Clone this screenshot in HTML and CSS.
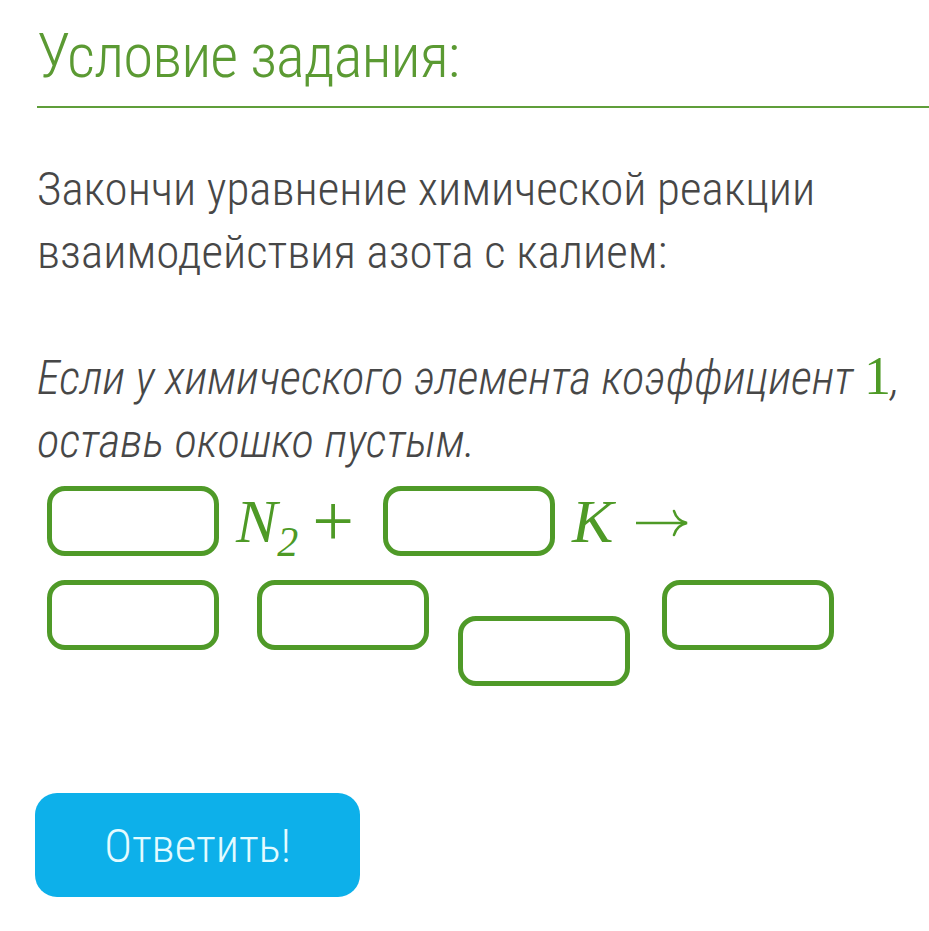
FILE: index.html
```html
<!DOCTYPE html>
<html lang="ru">
<head>
<meta charset="utf-8">
<title>Условие задания</title>
<link rel="stylesheet" href="styles.css">
</head>
<body>
<main class="task">
  <h1 class="task-title">Условие задания:</h1>
  <p class="task-text">Закончи уравнение химической реакции взаимодействия азота с калием:</p>
  <p class="task-hint">Если у химического элемента коэффициент <span class="num">1</span>, оставь окошко пустым.</p>
  <div class="equation">
    <div class="eq-row">
      <span class="box"></span>
      <span class="math">N<sub>2</sub></span>
      <span class="op">+</span>
      <span class="box"></span>
      <span class="math k">K</span>
      <svg class="arrow" width="54" height="30" viewBox="0 0 54 30" aria-hidden="true">
        <path d="M1 15 H51" stroke="#4e9a26" stroke-width="2.6" fill="none"/>
        <path d="M39 3 C41 10 45 13.5 52 15 C45 16.5 41 20 39 27" stroke="#4e9a26" stroke-width="2.6" fill="none" stroke-linecap="round"/>
      </svg>
    </div>
    <div class="eq-row row2">
      <span class="box"></span>
      <span class="box"></span>
      <span class="box low"></span>
      <span class="box"></span>
    </div>
  </div>
  <button class="answer-btn" type="button">Ответить!</button>
</main>
</body>
</html>
```
FILE: styles.css
```css
html, body {
  margin: 0;
  padding: 0;
  background: #ffffff;
}
body {
  font-family: Roboto, "Noto Sans", sans-serif;
  font-stretch: 80%;
  color: #474747;
}
.task {
  padding: 20px 0 0 37px;
}
.task-title {
  margin: 0;
  font-size: 61px;
  letter-spacing: -1px;
  font-weight: 300;
  color: #5b9a33;
  line-height: 72px;
  padding-bottom: 14px;
  border-bottom: 2px solid #5f9e3a;
}
.task-text {
  margin: 49px 0 0;
  font-size: 47px;
  font-weight: 300;
  line-height: 63px;
}
.task-hint {
  margin: 63px 0 0;
  font-size: 47px;
  font-weight: 300;
  font-style: italic;
  line-height: 63px;
}
.num {
  font-family: "Liberation Serif", serif;
  font-style: normal;
  color: #4e9a26;
  font-size: 54px;
  line-height: 40px;
}
.equation {
  margin: 14px 0 0 10px;
}
.eq-row {
  display: flex;
  align-items: center;
}
.row2 {
  align-items: flex-start;
  margin-top: 24px;
}
.box {
  display: block;
  box-sizing: border-box;
  width: 172px;
  height: 70px;
  border: 5px solid #4f9a28;
  border-radius: 18px;
}
.row2 .box + .box {
  margin-left: 38px;
}
.row2 .box.low {
  margin-left: 29px;
  margin-top: 36px;
}
.row2 .box.low + .box {
  margin-left: 32px;
}
.math {
  font-family: "Liberation Serif", serif;
  font-style: italic;
  font-size: 62px;
  color: #4e9a26;
  margin-left: 17px;
  line-height: 70px;
}
.math sub {
  font-size: 42px;
  vertical-align: -14px;
  font-style: italic;
  line-height: 0;
}
.op {
  font-family: "Liberation Serif", serif;
  font-size: 74px;
  color: #4e9a26;
  margin: 0 29px 0 14px;
  line-height: 70px;
}
.k {
  margin-left: 17px;
}
.arrow {
  display: block;
  margin-left: 22px;
  margin-top: 4px;
}
.answer-btn {
  display: block;
  margin: 107px 0 0 -2px;
  width: 325px;
  height: 104px;
  border: none;
  border-radius: 22px;
  background: #0db0ea;
  color: #e3fbff;
  font-family: Roboto, "Noto Sans", sans-serif;
  font-stretch: 80%;
  font-size: 47px;
  font-weight: 300;
}
```
